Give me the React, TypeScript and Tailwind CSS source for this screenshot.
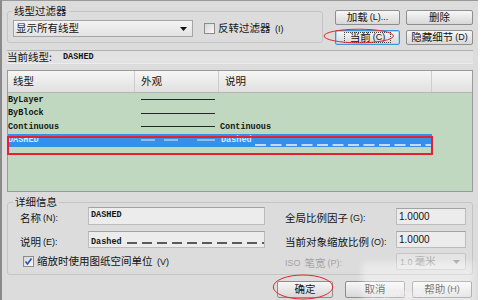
import React from "react";

const mono = "font-['Liberation_Mono',monospace] text-[8.5px] font-bold";
const small = "font-['Liberation_Sans',sans-serif] text-[9px]";

function Btn({
  children,
  className = "",
  border = "border-[#8e8e8e]",
}: {
  children: React.ReactNode;
  className?: string;
  border?: string;
}) {
  return (
    <div
      className={`flex items-center justify-center border ${border} rounded-[2px] bg-linear-to-b from-[#f7f7f7] to-[#d8d8d8] ${className}`}
    >
      {children}
    </div>
  );
}

function Paren({ t }: { t: string }) {
  return <span className={`${small} ml-[2px]`}>{t}</span>;
}

const cols = "grid grid-cols-[127px_84px_213px_40px]";

export default function App() {
  const rows = [
    { name: "ByLayer", desc: "" },
    { name: "ByBlock", desc: "" },
    { name: "Continuous", desc: "Continuous" },
  ];
  return (
    <div className="relative w-[500px] h-[300px] overflow-hidden bg-white text-[10.5px] leading-none text-[#141414] font-['Noto_Sans_CJK_SC',sans-serif]">
      <div className="flex flex-col w-[478px] h-[300px] bg-[#dcdcdc] border-l-2 border-l-[#8a8a8a] border-t border-t-[#9a9a9a] px-[5px] pt-[3px]">
        {/* top row */}
        <div className="flex h-[43px] shrink-0">
          <fieldset className="w-[316px] h-[39px] border border-[#c4c4c4] rounded-[3px] pl-[5px]">
            <legend className="ml-[-1px] px-[2px] leading-[14px]">线型过滤器</legend>
            <div className="flex items-center mt-[2px]">
              <div className="flex items-center justify-between w-[180px] h-[17px] border border-[#a4a4a4] bg-linear-to-b from-[#f3f3f3] to-[#e3e3e3] pl-[2px] pr-[5px]">
                <span>显示所有线型</span>
                <svg width="7" height="4" viewBox="0 0 7 4">
                  <path d="M0 0H7L3.5 4Z" fill="#111" />
                </svg>
              </div>
              <div className="ml-[11px] w-[11px] h-[11px] border border-[#8c8c8c] bg-linear-to-br from-[#d6d6d6] to-[#f8f8f8]" />
              <span className="ml-[3px]">
                反转过滤器
                <Paren t=" (I)" />
              </span>
            </div>
          </fieldset>
          <div className="ml-[12px] mt-[6px] grid grid-cols-[65px_67px] grid-rows-[15px_15px] gap-x-[6px] gap-y-[5px] h-fit">
            <Btn>
              加载
              <Paren t="(L)..." />
            </Btn>
            <Btn>删除</Btn>
            <Btn border="border-[#3a96d8] shadow-[inset_0_0_0_1px_#a8d4f2]">
              <span className="flex items-center border border-dotted border-[#444] px-[5px] h-[11px]">
                当前
                <Paren t="(C)" />
              </span>
            </Btn>
            <Btn>
              隐藏细节
              <Paren t="(D)" />
            </Btn>
          </div>
        </div>

        {/* current linetype strip */}
        <div className="mt-[3px] h-[14px] shrink-0 flex items-center border-t border-t-[#b0b0b0] border-b border-b-[#ececec] bg-[#e2e2e2]">
          <span className="w-[56px]">当前线型:</span>
          <span className={mono}>DASHED</span>
        </div>

        {/* list */}
        <div className="mt-[6px] h-[122px] shrink-0 border border-[#9a9a9a] bg-[#c0d8c0] flex flex-col">
          <div className={`${cols} h-[22px] shrink-0 border-b border-b-[#b4b4b4] bg-linear-to-b from-[#f6f6f6] to-[#e0e0e0]`}>
            <div className="flex items-center pl-[5px] border-r border-r-[#cdcdcd]">线型</div>
            <div className="flex items-center pl-[6px] border-r border-r-[#cdcdcd]">外观</div>
            <div className="flex items-center pl-[6px] border-r border-r-[#cdcdcd]">说明</div>
            <div />
          </div>
          {rows.map((r) => (
            <div key={r.name} className={`${cols} h-[13.5px] shrink-0`}>
              <div className={`flex items-center ${mono}`}>{r.name}</div>
              <div className="flex items-center">
                <div className="ml-[6px] w-[74px] h-px bg-[#262626]" />
              </div>
              <div className={`flex items-center pl-[1px] ${mono}`}>{r.desc}</div>
              <div />
            </div>
          ))}
          <div className={`${cols} h-[13.5px] shrink-0`}>
            <div className={`flex items-center bg-[#3391eb] text-[#d6e8ff] ${mono}`}>DASHED</div>
            <div className="flex items-center bg-[#3391eb]">
              <svg width="84" height="4" viewBox="0 0 84 4">
                <path d="M6 2H20M29 2H43M62 2H80" stroke="#e4f0ff" strokeWidth="1" />
              </svg>
            </div>
            <div className="relative flex items-center pl-[2px] bg-[#3391eb] text-[#d6e8ff]">
              <span className={mono}>Dashed</span>
              <svg className="absolute left-[36px] top-[10px]" width="177" height="2" viewBox="0 0 177 2">
                <line x1="0" y1="1" x2="177" y2="1" stroke="#c4dcf8" strokeWidth="2" strokeDasharray="11 4.5" />
              </svg>
            </div>
            <div />
          </div>
        </div>

        {/* details */}
        <fieldset className="mt-[4px] h-[79px] shrink-0 border border-[#c4c4c4] rounded-[3px] pl-[12px] pr-[6px]">
          <legend className="ml-[-7px] px-[2px] leading-[12px]">详细信息</legend>
          <div className="flex mt-[-1px]">
            <div className="flex flex-col w-[245px]">
              <div className="flex h-[18px]">
                <div className="w-[68px] flex items-center pt-[5px]">
                  名称<Paren t="(N):" />
                </div>
                <div className={`w-[177px] h-full border border-[#bcbcbc] border-t-[#a2a2a2] bg-[#ececec] pl-[2px] pt-[3px] ${mono}`}>
                  DASHED
                </div>
              </div>
              <div className="flex h-[17px] mt-[6px]">
                <div className="w-[68px] flex items-center pt-[5px]">
                  说明<Paren t="(E):" />
                </div>
                <div className="relative w-[177px] h-full border border-[#bcbcbc] border-t-[#a2a2a2] bg-[#ececec] pl-[2px] pt-[3px]">
                  <span className={mono}>Dashed</span>
                  <svg className="absolute left-[38px] top-[10px]" width="137" height="2" viewBox="0 0 137 2">
                    <line x1="0" y1="1" x2="137" y2="1" stroke="#2a2a2a" strokeWidth="1.5" strokeDasharray="10 5" />
                  </svg>
                </div>
              </div>
              <div className="flex items-center h-[17px] mt-[5px]">
                <div className="ml-[3px] w-[11px] h-[11px] border border-[#8c8c8c] bg-linear-to-br from-[#d6d6d6] to-[#f8f8f8] flex items-center justify-center">
                  <svg width="9" height="9" viewBox="0 0 9 9">
                    <path d="M1.5 4.5L3.5 7L7.5 1.5" fill="none" stroke="#2850c8" strokeWidth="1.6" />
                  </svg>
                </div>
                <span className="ml-[3px]">
                  缩放时使用图纸空间单位
                  <Paren t=" (V)" />
                </span>
              </div>
            </div>
            <div className="flex flex-col ml-[20px] w-[181px]">
              <div className="flex h-[18px]">
                <div className="w-[111px] flex items-center pt-[5px]">
                  全局比例因子<Paren t="(G):" />
                </div>
                <div className="w-[70px] h-[17px] mt-[1px] border border-[#bcbcbc] border-t-[#a2a2a2] bg-[#ececec] pl-[2px] pt-[3px] font-['Liberation_Sans',sans-serif] text-[10px]">
                  1.0000
                </div>
              </div>
              <div className="flex h-[17px] mt-[6px]">
                <div className="w-[111px] flex items-center pt-[5px]">
                  当前对象缩放比例<Paren t="(O):" />
                </div>
                <div className="w-[70px] h-full border border-[#bcbcbc] border-t-[#a2a2a2] bg-[#ececec] pl-[2px] pt-[3px] font-['Liberation_Sans',sans-serif] text-[10px]">
                  1.0000
                </div>
              </div>
              <div className="flex h-[17px] mt-[5px] text-[#a4a4a4]">
                <div className="w-[111px] flex items-center pt-[3px]">
                  <span className={small}>ISO</span>
                  <span className="ml-[4px]">笔宽</span>
                  <Paren t="(P):" />
                </div>
                <div className="w-[70px] h-full flex items-center justify-between border border-[#c4c4c4] rounded-[2px] bg-[#e4e4e4] pl-[3px] pr-[5px]">
                  <span>
                    <span className={small}>1.0</span> 毫米
                  </span>
                  <svg width="7" height="4" viewBox="0 0 7 4">
                    <path d="M0 0H7L3.5 4Z" fill="#a0a0a0" />
                  </svg>
                </div>
              </div>
            </div>
          </div>
        </fieldset>

        {/* bottom buttons */}
        <div className="mt-[6px] flex justify-end pr-[1px] h-[17px] shrink-0">
          <Btn className="w-[56px]">确定</Btn>
          <Btn className="w-[60px] ml-[12px]">取消</Btn>
          <Btn className="w-[60px] ml-[7px]">
            帮助
            <Paren t="(H)" />
          </Btn>
        </div>
      </div>

      {/* annotations */}
      <svg className="absolute left-0 top-0 pointer-events-none" width="500" height="300" viewBox="0 0 500 300">
        <rect x="8" y="137" width="424" height="17" fill="none" stroke="#e8202a" strokeWidth="2" />
        <ellipse cx="358.7" cy="36" rx="34.7" ry="6.8" fill="none" stroke="#e02828" strokeWidth="1" />
        <ellipse cx="303" cy="287" rx="29.7" ry="12" fill="none" stroke="#e02828" strokeWidth="1" />
      </svg>
      {/* watermark */}
      <div className="absolute left-[362px] top-[262px] w-[112px] h-[40px] bg-white/40 blur-[3px]" />
      <div className="absolute left-[372px] top-[289px] text-[9px] leading-[10px] text-white/50 font-['Liberation_Sans',sans-serif]">
        jingyan.baidu.com
      </div>
    </div>
  );
}
